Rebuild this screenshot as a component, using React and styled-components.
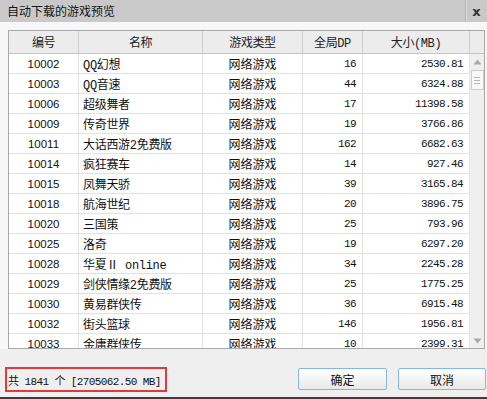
import React from 'react'
import styled, { createGlobalStyle } from 'styled-components'

const games = [
  ['10002', 'QQ幻想', 16, '2530.81'],
  ['10003', 'QQ音速', 44, '6324.88'],
  ['10006', '超级舞者', 17, '11398.58'],
  ['10009', '传奇世界', 19, '3766.86'],
  ['10011', '大话西游2免费版', 162, '6682.63'],
  ['10014', '疯狂赛车', 14, '927.46'],
  ['10015', '凤舞天骄', 39, '3165.84'],
  ['10018', '航海世纪', 20, '3896.75'],
  ['10020', '三国策', 25, '793.96'],
  ['10025', '洛奇', 19, '6297.20'],
  ['10028', '华夏Ⅱ online', 34, '2245.28'],
  ['10029', '剑侠情缘2免费版', 25, '1775.25'],
  ['10030', '黄易群侠传', 36, '6915.48'],
  ['10032', '街头篮球', 146, '1956.81'],
  ['10033', '金庸群侠传', 10, '2399.31'],
]

const columns = [
  { key: 'id', title: '编号', width: 70 },
  { key: 'name', title: '名称', width: 124 },
  { key: 'type', title: '游戏类型', width: 100 },
  { key: 'dp', title: '全局DP', width: 60 },
  { key: 'size', title: '大小(MB)', width: 107 },
]

const cjk = '"Noto Sans CJK SC", "Liberation Sans", sans-serif'
const mono = '"Liberation Mono", "Noto Sans CJK SC", monospace'

const GlobalStyle = createGlobalStyle`
  html, body {
    margin: 0;
    padding: 0;
    background: #f4f4f4;
  }
  * {
    box-sizing: border-box;
  }
`

const Window = styled.div`
  width: 487px;
  height: 399px;
  display: flex;
  flex-direction: column;
  background: #f5f5f5;
  border-bottom: 2px solid #3c3c3c;
  font-family: ${cjk};
  font-size: 12px;
  color: #111;
  overflow: hidden;
`

const TitleBar = styled.div`
  height: 22px;
  display: flex;
  align-items: center;
  background: #c9c9c9;
`

const Title = styled.div`
  flex: 1;
  padding-left: 7px;
  font-size: 12px;
  line-height: 22px;
  color: #151515;
`

const CloseBox = styled.div`
  width: 22px;
  height: 22px;
  display: flex;
  align-items: center;
  justify-content: center;
  border-left: 1px solid #b4b4b4;
  box-shadow: inset 1px 0 0 #dadada;
  font-family: "DejaVu Sans", sans-serif;
  font-weight: bold;
  font-size: 13px;
  color: #333;
`

const Content = styled.div`
  padding: 8px 2px 0 8px;
  background: #f7f7f7;
`

const Table = styled.div`
  width: 477px;
  height: 319px;
  display: flex;
  flex-direction: column;
  border: 1px solid #a8a8a8;
  background: #fff;
`

const HeaderRow = styled.div`
  height: 23px;
  display: flex;
  background: #ececec;
  border-bottom: 1px solid #c4c4c4;
`

const HeaderCell = styled.div`
  width: ${(p) => p.$w}px;
  flex: none;
  display: flex;
  align-items: center;
  justify-content: center;
  border-right: 1px solid #cfcfcf;
  font-family: ${mono};
  font-size: 12px;
  letter-spacing: -0.4px;
  color: #222;
`

const HeaderFill = styled.div`
  flex: 1;
`

const Body = styled.div`
  flex: 1;
  display: flex;
  overflow: hidden;
`

const Rows = styled.div`
  flex: 1;
  overflow: hidden;
`

const Row = styled.div`
  height: 20px;
  display: flex;
  border-bottom: 1px solid #e2e2e2;
`

const Cell = styled.div`
  width: ${(p) => p.$w}px;
  flex: none;
  display: flex;
  align-items: center;
  justify-content: center;
  border-right: 1px solid #e2e2e2;
  white-space: nowrap;
  font-family: ${cjk};
  font-size: 12px;
  color: #111;
`

const IdCell = styled(Cell)`
  font-family: "Liberation Sans", sans-serif;
  font-size: 11.5px;
`

const NameCell = styled(Cell)`
  justify-content: flex-start;
  padding-left: 4px;
  font-family: ${mono};
  letter-spacing: -0.3px;
`

const NumCell = styled(Cell)`
  justify-content: flex-end;
  padding-right: 6px;
  font-family: ${mono};
  font-size: 11px;
  letter-spacing: -0.6px;
`

const Scrollbar = styled.div`
  width: 15px;
  flex: none;
  display: flex;
  flex-direction: column;
  align-items: center;
  background: #efefef;
  border-left: 1px solid #e4e4e4;
`

const Arrow = styled.div`
  width: 15px;
  height: 15px;
  flex: none;
  display: flex;
  align-items: center;
  justify-content: center;
`

const Thumb = styled.div`
  width: 13px;
  height: 20px;
  margin-top: 1px;
  border: 1px solid #cdcdcd;
  background: #f9f9f9;
  display: flex;
  flex-direction: column;
  align-items: center;
  justify-content: center;
  gap: 2px;
`

const Grip = styled.span`
  width: 6px;
  height: 1px;
  background: #b5b5b5;
`

const Track = styled.div`
  flex: 1;
`

const Footer = styled.div`
  flex: 1;
  display: flex;
  align-items: flex-start;
  padding: 18px 1px 0 5px;
  background: #efefef;
`

const Summary = styled.div`
  height: 25px;
  padding: 0 4px 0 1px;
  display: flex;
  align-items: center;
  border: 2px solid #e23a3c;
  font-family: ${mono};
  font-size: 11px;
  letter-spacing: -0.6px;
  color: #111;
`

const Spacer = styled.div`
  flex: 1;
`

const Buttons = styled.div`
  display: flex;
  gap: 11px;
  margin-top: 1px;
`

const Button = styled.button`
  width: ${(p) => p.$w}px;
  height: 22px;
  border: 1px solid #86b6e4;
  border-radius: 2px;
  background: linear-gradient(#ffffff, #e9e9e9);
  font-family: ${cjk};
  font-size: 12px;
  color: #111;
  padding: 0;
`

const UpIcon = () => (
  <svg width="9" height="6" viewBox="0 0 9 6">
    <path d="M4.5 0.5 L8.5 5.5 L0.5 5.5 Z" fill="#a9a9a9" />
  </svg>
)

const DownIcon = () => (
  <svg width="9" height="6" viewBox="0 0 9 6">
    <path d="M0.5 0.5 L8.5 0.5 L4.5 5.5 Z" fill="#a9a9a9" />
  </svg>
)

const App = () => {
  return (
    <>
      <GlobalStyle />
      <Window>
        <TitleBar>
          <Title>自动下载的游戏预览</Title>
          <CloseBox>x</CloseBox>
        </TitleBar>
        <Content>
          <Table>
            <HeaderRow>
              {columns.map((c) => (
                <HeaderCell key={c.key} $w={c.width}>
                  {c.title}
                </HeaderCell>
              ))}
              <HeaderFill />
            </HeaderRow>
            <Body>
              <Rows>
                {games.map(([id, name, dp, size]) => (
                  <Row key={id}>
                    <IdCell $w={70}>{id}</IdCell>
                    <NameCell $w={124}>{name}</NameCell>
                    <Cell $w={100}>网络游戏</Cell>
                    <NumCell $w={60}>{dp}</NumCell>
                    <NumCell $w={107}>{size}</NumCell>
                  </Row>
                ))}
              </Rows>
              <Scrollbar>
                <Arrow>
                  <UpIcon />
                </Arrow>
                <Thumb>
                  <Grip />
                  <Grip />
                  <Grip />
                </Thumb>
                <Track />
                <Arrow>
                  <DownIcon />
                </Arrow>
              </Scrollbar>
            </Body>
          </Table>
        </Content>
        <Footer>
          <Summary>共 1841 个 [2705062.50 MB]</Summary>
          <Spacer />
          <Buttons>
            <Button $w={89}>确定</Button>
            <Button $w={88}>取消</Button>
          </Buttons>
        </Footer>
      </Window>
    </>
  )
}

export default App
